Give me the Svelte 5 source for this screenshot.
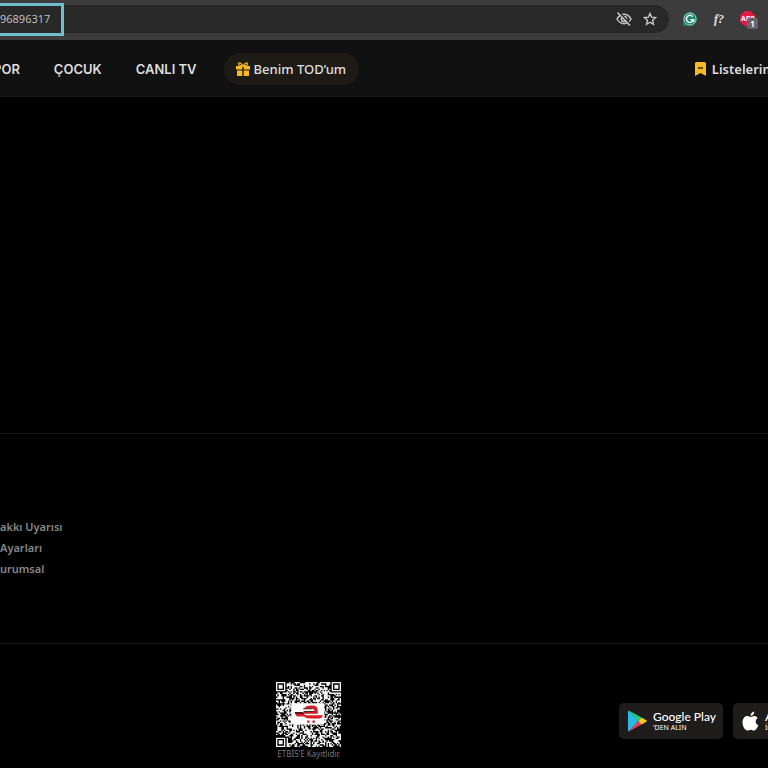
<script lang="ts">
  const navLinks = ['POR', 'ÇOCUK', 'CANLI TV']
  const footerLinks = ['akkı Uyarısı', 'Ayarları', 'urumsal']

  const QR_SIZE = 49

  function finderModule(x: number, y: number): boolean | null {
    const fx = x > QR_SIZE - 9 ? QR_SIZE - 1 - x : x
    const fy = y > QR_SIZE - 9 ? QR_SIZE - 1 - y : y
    if (fx > 7 || fy > 7 || (fx !== x && fy !== y)) return null
    const ring = Math.max(Math.abs(fx - 3), Math.abs(fy - 3))
    return ring === 3 || ring < 2
  }

  function qrPath() {
    let seed = 7919
    let d = ''
    for (let y = 0; y < QR_SIZE; y++) {
      for (let x = 0; x < QR_SIZE; x++) {
        seed = (seed * 48271) % 2147483647
        const on = finderModule(x, y) ?? seed / 2147483647 < 0.54
        if (on) d += `M${x} ${y}h1v1h-1z`
      }
    }
    return d
  }

  const qr = qrPath()
</script>

<div class="page">
  <div class="browser-bar">
    <div class="omnibox">
      <input class="url" type="text" value="96896317" aria-label="URL" />
      <button class="icon-btn" aria-label="Tracking">
        <svg width="16" height="16" viewBox="0 0 16 16" fill="none" stroke="#c8c8c8" stroke-width="1.5">
          <path d="M1 8C3 4.500 5.500 3.300 8 3.300S13 4.500 15 8C13 11.500 10.500 12.700 8 12.700S3 11.500 1 8Z" />
          <circle cx="8" cy="8" r="2.600" />
          <path d="M3 1.500 15 14" stroke="#282828" stroke-width="2" />
          <path d="M1.500 1.500 14 14.500" />
        </svg>
      </button>
      <button class="icon-btn" aria-label="Bookmark">
        <svg width="14" height="14" viewBox="0 0 14 14" fill="none" stroke="#c8c8c8" stroke-width="1.400">
          <path d="m7 1.500 1.600 3.700 4 .4-3 2.700.9 4L7 10.200l-3.500 2.100.9-4-3-2.700 4-.4Z" />
        </svg>
      </button>
    </div>
    <div class="extensions">
      <button class="icon-btn" aria-label="Grammarly">
        <svg width="16" height="16" viewBox="0 0 16 16" fill="none">
          <path d="M8 1a7 7 0 1 1 0 14H1V8a7 7 0 0 1 7-7Z" fill="#168568" />
          <circle cx="8" cy="8" r="6" stroke="#d8eee7" stroke-width=".7" />
          <path d="M10.800 5.600A3.600 3.600 0 1 0 11.500 8.700H8.500M11.600 8.500v2.600" stroke="#fff" stroke-width="1.500" />
        </svg>
      </button>
      <button class="icon-btn font-finder" aria-label="WhatFont">f?</button>
      <button class="icon-btn blocker" aria-label="Adblock Plus">
        <svg width="16" height="16" viewBox="0 0 16 16">
          <path d="M4.500 0h6L15 4.500v6L10.500 15h-6L0 10.500v-6Z" fill="#e21b45" />
          <text x="8" y="10" text-anchor="middle">ABP</text>
        </svg>
        <span class="count">1</span>
      </button>
    </div>
    <div class="highlight"></div>
  </div>

  <header>
    <nav>
      {#each navLinks as link}
        <a href="#/">{link}</a>
      {/each}
      <a class="pill" href="#/">
        <svg width="14" height="14" viewBox="0 0 14 14" fill="#fcb81f">
          <path d="M0 4h6.300v3.500H0ZM7.700 4H14v3.500H7.700ZM1 8.500h5.300V14H1ZM7.700 8.500H13V14H7.700Z" />
          <path d="M7 4C5 .5 2.400 0 2.500 2.200 2.600 3.800 5 3.800 7 4Zm0 0C9 .5 11.600 0 11.500 2.200 11.400 3.800 9 3.800 7 4Z" fill="none" stroke="#fcb81f" stroke-width="1.200" />
        </svg>
        Benim TOD’um
      </a>
    </nav>
    <a class="lists" href="#/">
      <svg width="11" height="14" viewBox="0 0 11 14">
        <path d="M0 1.500Q0 0 1.500 0h8Q11 0 11 1.500V14l-5.500-3L0 14Z" fill="#fcb81f" />
        <path d="M3 6h5" stroke="#111" stroke-width="1.300" />
      </svg>
      Listelerim
    </a>
  </header>

  <main></main>

  <footer>
    <ul class="links">
      {#each footerLinks as link}
        <li><a href="#/">{link}</a></li>
      {/each}
    </ul>
    <div class="bottom">
      <div class="etbis">
        <svg width="65" height="65" viewBox="0 0 49 49" role="img" aria-label="ETBİS QR">
          <path d={qr} fill="#f4f4f4" />
          <rect x="11.500" y="16" width="25" height="16" rx="1.500" fill="#fff" />
          <path d="M20.500 20.200Q23 17.800 26 17.800h1.500q4 0 4 4V24H21.500l-1-1.800h8.500q0-2-2-2Z" fill="#d01e27" />
          <path d="M20.500 20.200h6.500M21 22.200h8" stroke="#4a1216" stroke-width=".7" />
          <path d="M14 22.600h6.500l1 1.600h-7Z" fill="#5a1519" />
          <path d="M14.500 24.200h6.500l1.500.8h13q-.8 2.600-4 2.600h-6q-2.500 0-4.500-1.600h-4.500q-1.500 0-2-1.800Z" fill="#df1b26" />
          <path d="M23.500 29h1.800v1.800h-1.800ZM27.500 29h1.800v1.800h-1.800Z" fill="#cc2028" />
        </svg>
        <span>ETBİS'E Kayıtlıdır.</span>
      </div>
      <div class="stores">
        <a class="store" href="#/">
          <svg width="19" height="22" viewBox="0 0 19 22">
            <path d="M.8.400 10.500 11 .8 21.600Q0 21 0 20V2Q0 1 .8.400Z" fill="#24bce5" />
            <path d="M.8.400 13.500 7.600 10.300 11Z" fill="#24cf77" />
            <path d="M.8 21.600 13.500 14.400 10.300 11Z" fill="#ed4053" />
            <path d="M13.500 7.600 18.300 10.300Q19.200 11 18.300 11.700L13.500 14.400 10.300 11Z" fill="#fbc51d" />
          </svg>
          <span class="store-text">
            <strong>Google Play</strong>
            <small>'DEN ALIN</small>
          </span>
        </a>
        <a class="store" href="#/">
          <svg width="17" height="20" viewBox="0 0 17 20" fill="#fff">
            <path d="M12 5c1.500 0 2.900.7 3.800 2-3.100 1.900-2.700 6 .5 7.200-.9 2.500-2.600 5.300-4.300 5.300-1.300 0-1.800-.8-3.300-.8s-2 .8-3.300.8C3 19.500.5 15.400.5 11.300.5 7.500 2.800 5 5.300 5c1.500 0 2.500.9 3.600.9C10 5.900 10.800 5 12 5Z" />
            <path d="M12.200.5c.2 2.300-1.500 4.200-3.600 4.300C8.400 2.600 10.200.7 12.200.5Z" />
          </svg>
          <span class="store-text">
            <strong>App Store</strong>
            <small>İndirin</small>
          </span>
        </a>
      </div>
    </div>
  </footer>
</div>

<style>
  :global(body) {
    margin: 0;
    background: #000;
  }

  .page {
    display: flex;
    flex-direction: column;
    min-height: 100vh;
    overflow: hidden;
    font-family: 'Noto Sans', 'Open Sans', sans-serif;
    color: #dedede;
  }

  a {
    color: inherit;
    text-decoration: none;
  }

  svg {
    flex-shrink: 0;
  }

  .browser-bar {
    position: relative;
    display: flex;
    align-items: center;
    gap: 13px;
    padding: 5px 9px 7px 0;
    background: #3c3c3c;
  }

  .omnibox {
    flex: 1;
    display: flex;
    align-items: center;
    gap: 10px;
    height: 28px;
    padding-right: 11px;
    border-radius: 0 14px 14px 0;
    background: #282828;
  }

  .url {
    flex: 1;
    min-width: 0;
    padding: 0 0 2px;
    border: 0;
    outline: 0;
    background: transparent;
    color: #c4c4c4;
    font: 11px 'Open Sans', sans-serif;
  }

  .icon-btn {
    display: flex;
    align-items: center;
    justify-content: center;
    width: 16px;
    height: 16px;
    padding: 0;
    border: 0;
    background: none;
    color: #e4e4e4;
  }

  .extensions {
    display: flex;
    gap: 13px;
    padding-right: 3px;
  }

  .font-finder {
    font: italic 700 12px 'Liberation Serif', serif;
  }

  .blocker {
    position: relative;
  }

  .blocker text {
    fill: #fff;
    font: 700 7px 'Noto Sans', sans-serif;
  }

  .count {
    position: absolute;
    left: 7px;
    top: 7px;
    width: 11px;
    height: 11px;
    border-radius: 2px;
    background: #666;
    color: #fff;
    font: 700 8px/11px 'Noto Sans', sans-serif;
    text-align: center;
  }

  .highlight {
    position: absolute;
    left: 0;
    top: 3px;
    width: 61px;
    height: 27px;
    border: 3px solid #70bdcd;
    border-left: 0;
  }

  header {
    display: flex;
    align-items: center;
    justify-content: space-between;
    height: 54px;
    padding-top: 2px;
    border-bottom: 1px solid #191919;
    background: #111;
    font-size: 13px;
    font-weight: 600;
    white-space: nowrap;
  }

  nav {
    display: flex;
    align-items: center;
    gap: 34px;
    margin-left: -7px;
    font-family: Inter, sans-serif;
  }

  .pill {
    display: flex;
    align-items: center;
    gap: 4px;
    height: 32px;
    margin-left: -7px;
    padding: 0 13px 0 12px;
    border-radius: 16px;
    background: #1e1b16;
    font-family: 'Noto Sans', sans-serif;
    font-weight: 500;
  }

  .lists {
    display: flex;
    align-items: center;
    gap: 6px;
    margin-right: -7px;
  }

  main {
    flex: 1;
    min-height: 336px;
  }

  footer {
    border-top: 1px solid #161616;
  }

  .links {
    margin: 0;
    padding: 82px 0 64px;
    list-style: none;
    color: #878787;
    font-size: 11px;
    font-weight: 600;
    line-height: 21px;
  }

  .bottom {
    display: flex;
    justify-content: space-between;
    padding: 38px 0 9px;
    border-top: 1px solid #161616;
  }

  .etbis {
    display: flex;
    flex-direction: column;
    align-items: center;
    gap: 2px;
    margin-left: 36%;
    color: #777;
    font-size: 8px;
    line-height: 10px;
  }

  .stores {
    display: flex;
    align-items: center;
    gap: 10px;
    margin-right: -69px;
  }

  .store {
    display: flex;
    align-items: center;
    gap: 6px;
    box-sizing: border-box;
    width: 104px;
    height: 36px;
    padding-left: 9px;
    border-radius: 5px;
    background: #1f1d1b;
    color: #fff;
    white-space: nowrap;
  }

  .store-text {
    display: flex;
    flex-direction: column;
  }

  .store strong {
    font-family: Lato, sans-serif;
    font-size: 12px;
    font-weight: 500;
    line-height: 14px;
  }

  .store small {
    font-size: 7px;
    line-height: 8px;
  }
</style>
